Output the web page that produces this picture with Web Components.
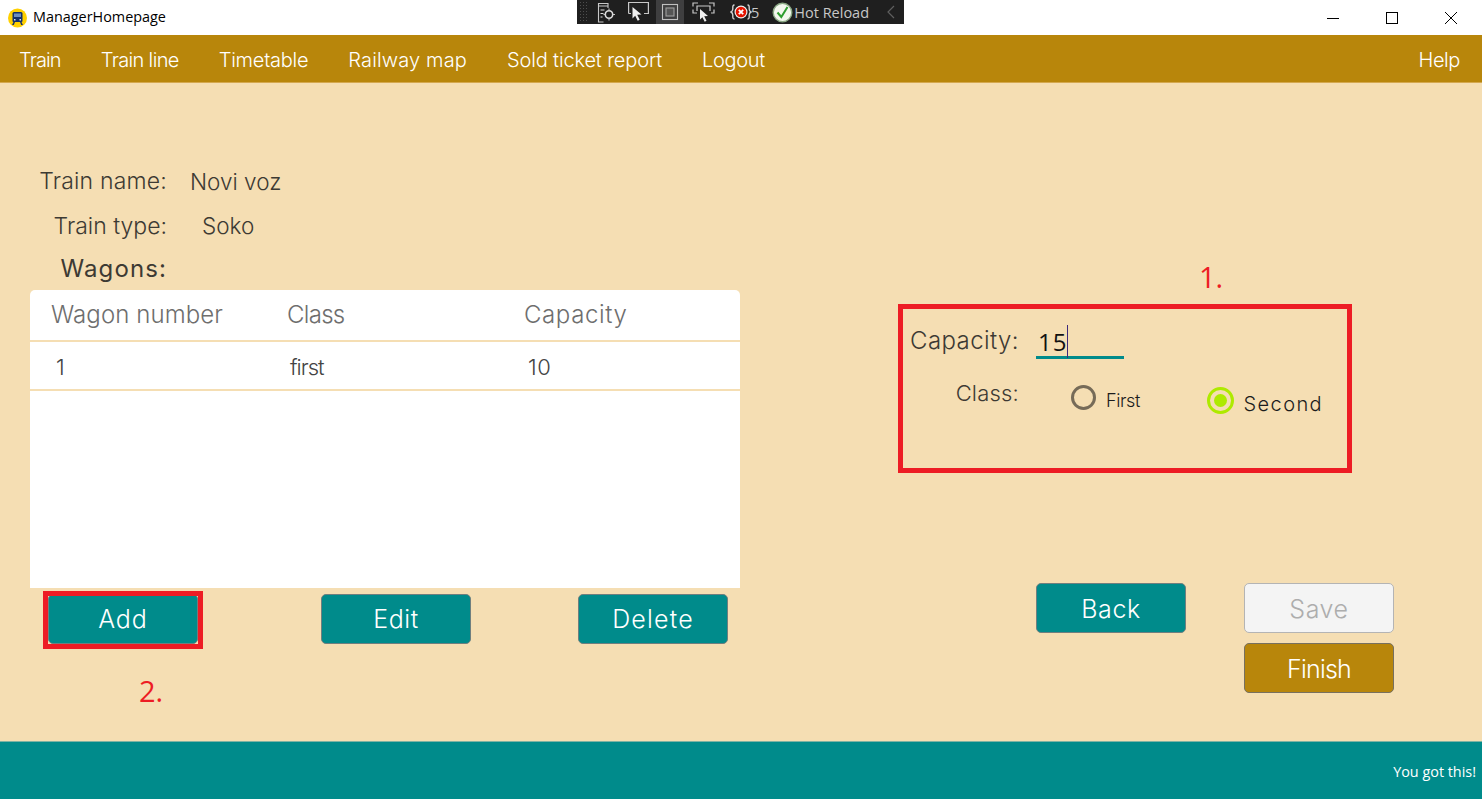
<!DOCTYPE html>
<html lang="en"><head><meta charset="utf-8"><title>ManagerHomepage</title>
<style>
html,body{margin:0;padding:0;background:#F5DEB3;}
body{width:1482px;height:799px;overflow:hidden;font-family:"Inter","Lato",sans-serif;}
</style></head><body>
<app-window>
  <title-bar></title-bar>
  <menu-bar>
    <menu-link style="--ls:-.9px">Train</menu-link><menu-link style="--ls:-.65px">Train line</menu-link><menu-link style="--ls:-.25px">Timetable</menu-link><menu-link style="--ls:.15px">Railway map</menu-link><menu-link style="--ls:-.15px">Sold ticket report</menu-link><menu-link style="--ls:-.35px">Logout</menu-link>
    <menu-link slot="end" style="--ls:-.4px">Help</menu-link>
  </menu-bar>
  <train-form></train-form>
  <status-bar>You got this!</status-bar>
  <dev-toolbar></dev-toolbar>
  <note-box style="--x:898px;--y:304px;--w:454px;--h:169px;--b:5px"></note-box>
  <note-box style="--x:43px;--y:591px;--w:160px;--h:58px;--b:5px"></note-box>
  <note-mark style="--x:1199px;--y:257px">1.</note-mark>
  <note-mark style="--x:139px;--y:671px">2.</note-mark>
</app-window>
<script>
const FONT='"Inter","Lato",sans-serif';
function def(name,html){
  customElements.define(name,class extends HTMLElement{
    constructor(){super();this.attachShadow({mode:'open'}).innerHTML=html;}
  });
}
def('app-window',`<style>:host{display:flex;flex-direction:column;position:relative;width:1482px;height:799px;overflow:hidden;background:#F5DEB3;}</style><slot></slot>`);
def('title-bar',`<style>
:host{display:flex;align-items:center;height:35px;background:#fff;flex:none;padding:0 2px 0 8px;box-sizing:border-box;color:#000;}
.t{margin:0 0 2px 6px;font:14.4px "Open Sans",sans-serif;}
.ctl{margin-left:auto;display:flex;}
.ctl span{display:flex;width:59px;height:33px;align-items:center;justify-content:center}
</style>
<svg width="19" height="20" viewBox="0 0 19 20"><circle cx="9.500" cy="10" r="9.500" fill="#FFD000"/><path d="M6 4h7a1.500 1.500 0 0 1 1.500 1.500V13a1 1 0 0 1-1 1h-8a1 1 0 0 1-1-1V5.500A1.500 1.500 0 0 1 6 4z" fill="#13306b"/><rect x="6" y="5.500" width="7" height="3.500" fill="#6d8fc0"/><rect x="6" y="11" width="1.500" height="1.500" fill="#dfe6f2"/><rect x="11.500" y="11" width="1.500" height="1.500" fill="#dfe6f2"/><path d="M5.500 14L4 17h1.800l1.200-3zM13.500 14l1.500 3h-1.800L12 14z" fill="#13306b"/></svg>
<span class="t">ManagerHomepage</span>
<div class="ctl">
<span><svg width="12" height="12" viewBox="0 0 12 12"><path d="M0 6.500h12" stroke="#000" fill="none"/></svg></span>
<span><svg width="12" height="12" viewBox="0 0 12 12"><rect x=".5" y=".5" width="11" height="11" stroke="#000" fill="none"/></svg></span>
<span><svg width="12" height="12" viewBox="0 0 12 12"><path d="M0 0l12 12M12 0L0 12" stroke="#000" fill="none"/></svg></span>
</div>`);
def('dev-toolbar',`<style>
:host{position:absolute;left:577px;top:0;width:327px;height:24px;background:#1f1f1f;display:block;font:14.5px "Open Sans",sans-serif;color:#c8c8c8;}
.row{display:flex;align-items:center;height:24px;}
.grip{width:9px;height:22px;margin-left:2px;background-image:radial-gradient(#4d4d4d .7px,transparent .9px);background-size:3px 3px;flex:none}
.i{display:flex;align-items:center;justify-content:center;height:24px;flex:none}
.on{background:#3f3f40}
</style><div class="row">
<span class="grip"></span>
<span class="i" style="margin-left:7px;width:22px"><svg width="22" height="22" viewBox="0 0 22 22" fill="none" stroke="#c8c8c8" stroke-width="1.100"><path d="M3.500 10V2.500H13V7M3.500 5h9.500M3.500 8v13h5"/><path d="M5.500 9h4M5.500 12.500h3M5.500 16h2" stroke="#e0e0e0"/><circle cx="14" cy="13.500" r="3.700" stroke-width="1.600" stroke="#e0e0e0"/><path d="M14 7.500v2.500M14 17v2.500M8.500 13.500H10.500M17.500 13.500h2.500"/></svg></span>
<span class="i" style="margin-left:11px;width:22px"><svg width="22" height="22" viewBox="0 0 22 22" fill="none"><path d="M.6 12.500V1.500h19.800V12.500H16M.6 12.500H3" stroke="#c8c8c8" stroke-width="1.200"/><path d="M4.500 6l9 7.500-4.300.3 2.500 5-2 1-2.500-5L4.500 17.500z" fill="#f0f0f0"/></svg></span>
<span class="i on" style="margin-left:6px;width:28px"><svg width="18" height="18" viewBox="0 0 18 18" fill="none" stroke="#c0c0c0" stroke-width="1.100"><rect x="1.500" y="1.500" width="15" height="15"/><rect x="5" y="5" width="8" height="8" fill="#555" stroke="#a0a0a0"/></svg></span>
<span class="i" style="margin-left:7px;width:24px"><svg width="24" height="22" viewBox="0 0 24 22" fill="none" stroke="#c8c8c8" stroke-width="1.200"><path d="M2 5.500V2h5M18 2h5v3.500M2 8.500V12h4M23 8.500V12h-3M6 10V5h13v5"/><path d="M9 8l8 7-3.800.3 2.300 4.500-1.800.9-2.300-4.500L9 18.500z" fill="#f0f0f0" stroke="none"/></svg></span>
<span class="i" style="margin-left:15px;width:22px"><svg width="22" height="20" viewBox="0 0 22 20" fill="none"><path d="M4.500 3C2.500 3 2.800 5 2.800 7S2 9.500 1 10c1 .5 1.800 1 1.800 3s-.3 4 1.700 4M17.500 3c2 0 1.700 2 1.700 4s.8 2.500 1.800 3c-1 .5-1.800 1-1.800 3s.3 4-1.700 4" stroke="#d0d0d0" stroke-width="1.400"/><circle cx="11" cy="10" r="6.500" fill="#f0f0f0"/><circle cx="11" cy="10" r="5.300" fill="#e51400"/><path d="M8.800 7.800l4.400 4.400M13.200 7.800l-4.400 4.400" stroke="#fff" stroke-width="1.800"/></svg></span>
<span style="margin-left:-1px">5</span>
<span class="i" style="margin-left:13px;width:21px"><svg width="21" height="21" viewBox="0 0 21 21" fill="none"><circle cx="10.500" cy="10.500" r="9.300" fill="#f4f8ee" stroke="#8aa884" stroke-width="1.400"/><path d="M5.500 10.500l3.800 4.500L15.500 5" stroke="#2f9e2f" stroke-width="2"/></svg></span>
<span style="margin-left:1px">Hot Reload</span>
<span style="margin-left:auto;margin-right:9px;display:flex"><svg width="8" height="14" viewBox="0 0 8 14" fill="none"><path d="M7 1L1 7l6 6" stroke="#5f5f5f" stroke-width="1.200"/></svg></span>
</div>`);
def('menu-bar',`<style>
:host{display:flex;align-items:center;gap:40px;height:48px;flex:none;box-sizing:border-box;background:#B8860B;border-bottom:1px solid #D4A84F;padding:3px 22px 0 19px;}
.e{margin-left:auto}
</style><slot></slot><span class="e"><slot name="end"></slot></span>`);
def('menu-link',`<style>:host{display:inline-block;color:#fff;font:300 20px ${FONT};letter-spacing:var(--ls,0);white-space:nowrap}</style><slot></slot>`);
def('status-bar',`<style>:host{display:flex;flex:none;align-items:center;justify-content:flex-end;height:58px;box-sizing:border-box;background:#008B8B;border-top:1px solid #7fb3a3;padding:1px 6px 0 0;color:#fff;font:14.4px "Open Sans",sans-serif;}</style><slot></slot>`);
def('note-box',`<style>:host{position:absolute;left:var(--x);top:var(--y);width:var(--w);height:var(--h);box-sizing:border-box;border:var(--b) solid #ED1C24;display:block}</style>`);
def('note-mark',`<style>:host{position:absolute;left:var(--x);top:var(--y);color:#ED1C24;font:29px/40px "Open Sans",sans-serif;display:block}</style><slot></slot>`);
def('action-button',`<style>
:host{display:flex;align-items:center;justify-content:center;width:150px;height:50px;box-sizing:border-box;border:1px solid #6f7f7f;border-radius:5px;background:var(--bg,#008B8B);color:var(--fg,#fff);font:300 25px ${FONT};letter-spacing:var(--ls,.6px)}
:host([kind=finish]){--bg:#B8860B;--ls:-.8px;border-color:#77705f}
:host([kind=off]){--bg:#F4F4F4;--fg:#ADADAD;border-color:#B4B4B4}
</style><slot></slot>`);
def('radio-choice',`<style>
:host{display:inline-flex;align-items:center;color:#1c1c1c;font:300 var(--fs,18px) ${FONT};letter-spacing:var(--ls,0)}
.r{box-sizing:border-box;width:25px;height:25px;border-radius:50%;border:3px solid #766b58;display:flex;align-items:center;justify-content:center;flex:none;margin:0 10px 6px 0}
:host([checked]) .r{width:27px;height:27px;border-color:#AEEA00}
:host([checked]) .r::after{content:"";width:13px;height:13px;border-radius:50%;background:#AEEA00}
</style><span class="r"></span><slot></slot>`);
def('wagon-table',`<style>
:host{display:block;width:710px;height:298px;background:#fff;border-radius:5px 5px 0 0;font:300 22px ${FONT};color:#4a4a4a}
.row{display:grid;grid-template-columns:237px 237px 1fr;align-items:center;box-sizing:border-box}
.h{height:52px;padding-left:21px;color:#6e6e6e;border-bottom:2px solid #F5DEB3;padding-bottom:2px;font-size:24px}
.h span:nth-child(1){letter-spacing:.1px}
.h span:nth-child(2){margin-left:-1px;letter-spacing:-.7px}
.h span:nth-child(3){margin-left:-1px;letter-spacing:.6px}
.b{height:49px;padding:3px 0 0 26px;border-bottom:2px solid #F5DEB3;color:#444;}
.b span:nth-child(2){margin-left:-3px;letter-spacing:-1px}
.b span:nth-child(3){margin-left:-2px;letter-spacing:.7px}
</style>
<div class="row h"><span>Wagon number</span><span>Class</span><span>Capacity</span></div>
<div class="row b"><span>1</span><span>first</span><span>10</span></div>`);
def('train-form',`<style>
:host{display:flex;flex:1;min-height:0;color:#3d3a33;font:300 23px ${FONT}}
.left{width:740px;box-sizing:border-box;padding:83px 0 0 30px;display:flex;flex-direction:column;flex:none}
.info{display:grid;grid-template-columns:137px auto;justify-content:start;height:30px;align-items:center;white-space:nowrap}
.info b{font-weight:300;text-align:right}
.info span{margin-left:23px;font-size:22.500px}
.t1 b{letter-spacing:.2px}
.info.t2{margin-top:15px}.info.t2 span{margin:0 0 1px 35px}
.info.t3{margin-top:12px;margin-bottom:7px}.info.t3 b{font-weight:400;font-size:24px;letter-spacing:1.100px}
.btns{display:grid;grid-template-columns:273px 257px 150px;padding-left:18px;margin-top:6px}
.right{flex:1;padding-top:242px;box-sizing:border-box;}
.cap,.cls{display:grid;grid-template-columns:279px auto;white-space:nowrap}
.cap{align-items:start;height:34px}
.cap b,.cls b{font-weight:300;font-size:24px;text-align:right;padding-top:1px}
.cap b{letter-spacing:.4px}
.cls b{font-size:22px;letter-spacing:.2px;padding-top:2px}
.inp{margin-left:17px;width:88px;height:34px;box-sizing:border-box;border-bottom:3px solid #008B8B;color:#111;font:400 24px "Open Sans",sans-serif;letter-spacing:1px;line-height:33px;padding-left:2px;display:block}
.inp i{font-style:normal;border-right:1px solid #3d2a7a;}
.cls{margin-top:19px}
.radios{display:flex;margin-left:52px;align-items:flex-start;height:100px;width:252px;padding-top:7px;box-sizing:border-box}
.radios radio-choice:first-child{--ls:-.4px}
.radios radio-choice:last-child{margin-left:auto;margin-top:2px;--fs:20px;--ls:1.400px}
.acts{display:grid;grid-template-columns:150px 150px;column-gap:58px;row-gap:10px;margin:105px 0 0 296px}
.acts action-button{padding-top:2px}
.acts .f{grid-column:2}
</style>
<section class="left">
 <div class="info t1"><b>Train name:</b><span>Novi voz</span></div>
 <div class="info t2"><b>Train type:</b><span>Soko</span></div>
 <div class="info t3"><b>Wagons:</b></div>
 <wagon-table></wagon-table>
 <div class="btns"><action-button style="--ls:.9px">Add</action-button><action-button>Edit</action-button><action-button style="--ls:1.200px">Delete</action-button></div>
</section>
<section class="right">
 <div class="cap"><b>Capacity:</b><span class="inp"><i>15</i></span></div>
 <div class="cls"><b>Class:</b><div class="radios"><radio-choice>First</radio-choice><radio-choice checked>Second</radio-choice></div></div>
 <div class="acts"><action-button>Back</action-button><action-button kind="off">Save</action-button><action-button class="f" kind="finish">Finish</action-button></div>
</section>`);
</script>
</body></html>
